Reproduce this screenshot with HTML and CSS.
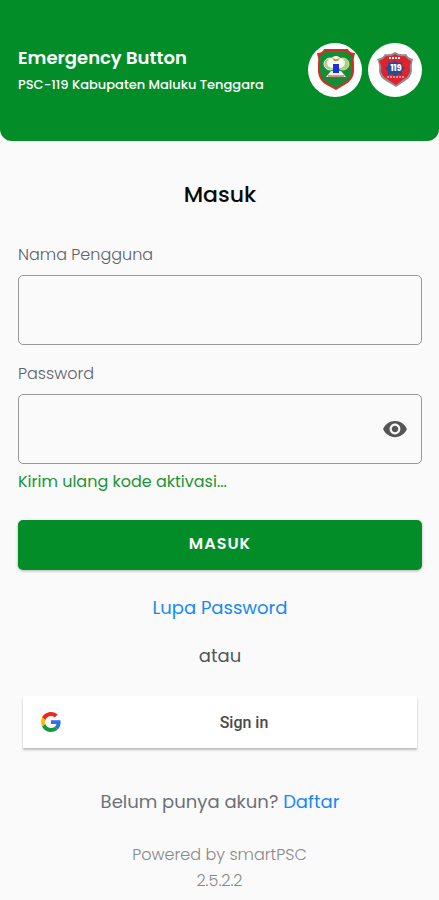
FILE: index.html
```html
<!DOCTYPE html>
<html lang="id">
<head>
  <meta charset="UTF-8" />
  <meta name="viewport" content="width=device-width, initial-scale=1.0"/>
  <title>Emergency Button - Masuk</title>
  <link rel="stylesheet" href="styles.css">
</head>
<body>
  <header class="topbar">
    <div class="brand">
      <div class="brand-name">Emergency Button</div>
      <div class="brand-region">PSC-119 Kabupaten Maluku Tenggara</div>
    </div>
    <div class="logos">
      <div class="logo">
        <svg width="54" height="54" viewBox="0 0 54 54" aria-hidden="true">
          <path d="M16 6 H40 Q41 10 47 10 Q45 16 46 22 V29 Q45 37 38 41 L28 47 L17 41 Q11 37 10 29 V22 Q11 16 9 10 Q15 10 16 6 Z" fill="#dc2a1e"/>
          <path d="M17 8 H39 Q40 12 45 12 Q43 17 44 22 V29 Q43 36 37 39 L28 45 L18 39 Q13 36 12 29 V22 Q13 17 11 12 Q16 12 17 8 Z" fill="#148c38"/>
          <circle cx="22" cy="21" r="6" fill="#a9cf8e" stroke="#efeecb" stroke-width="1"/>
          <circle cx="35" cy="21" r="6" fill="#a9cf8e" stroke="#ead56a" stroke-width="1"/>
          <circle cx="24" cy="20" r="5" fill="#f4f6ec"/>
          <circle cx="32" cy="20" r="5" fill="#f4f6ec"/>
          <circle cx="28" cy="19" r="6" fill="#fff"/>
          <path d="M24 15 L28 16 L32 15 L30 18 H26 Z" fill="#d69a2d"/>
          <path d="M23 28 H33 L38 34 H18 Z" fill="#f2f2f2"/>
          <rect x="25" y="21" width="6" height="9" fill="#1c2fe0"/>
          <path d="M20 33 H36" stroke="#d5281c" stroke-width="1"/>
        </svg>
      </div>
      <div class="logo">
        <svg width="54" height="54" viewBox="0 0 54 54" aria-hidden="true">
          <path d="M17 11 Q23 12 27 9 Q31 12 38 11 Q40 15 45 16 Q43 22 44 28 Q43 35 37 38 L28 44 L18 38 Q12 35 11 28 Q12 22 9 16 Q15 15 17 11 Z" fill="#8c8f94"/>
          <path d="M18 13 Q23 14 27 11 Q31 14 37 13 Q39 16 43 18 Q41 23 42 28 Q41 33 36 36 L28 42 L19 36 Q14 33 13 28 Q14 23 11 18 Q16 16 18 13 Z" fill="#e3202c"/>
          <path d="M27 17 L30 20 L34 19 V23 L37 25 L34 28 V32 L30 31 L27 34 L24 31 L20 32 V28 L17 25 L20 23 V19 L24 20 Z" fill="#254d91"/>
          <path d="M21 15 H33" stroke="#fff" stroke-width="2" stroke-dasharray="2 1"/>
          <text class="logo-number" x="28" y="28" text-anchor="middle">119</text>
          <path d="M19 34 H37" stroke="#fff" stroke-width="1" stroke-dasharray="2 1"/>
        </svg>
      </div>
    </div>
  </header>

  <main class="content">
    <h1 class="title">Masuk</h1>

    <form class="login-form">
      <div class="field">
        <label for="username">Nama Pengguna</label>
        <input type="text" id="username" name="username" class="text-input">
      </div>

      <div class="field">
        <label for="password">Password</label>
        <div class="password-box">
          <input type="password" id="password" name="password" class="password-input">
          <button type="button" class="toggle-password" aria-label="Tampilkan password">
            <svg width="26" height="26" viewBox="0 0 24 24" aria-hidden="true">
              <path fill="#555" d="M12 4.500C7 4.500 2.730 7.610 1 12c1.730 4.390 6 7.500 11 7.500s9.270-3.110 11-7.500c-1.730-4.390-6-7.500-11-7.500zM12 17c-2.760 0-5-2.240-5-5s2.240-5 5-5 5 2.240 5 5-2.240 5-5 5zm0-8c-1.660 0-3 1.340-3 3s1.340 3 3 3 3-1.340 3-3-1.340-3-3-3z"/>
            </svg>
          </button>
        </div>
      </div>

      <a href="#" class="resend">Kirim ulang kode aktivasi...</a>

      <button type="submit" class="btn-login">MASUK</button>
    </form>

    <a href="#" class="forgot">Lupa Password</a>
    <p class="or">atau</p>

    <button type="button" class="btn-google">
      <svg width="20" height="20" viewBox="0 0 48 48" aria-hidden="true">
        <path fill="#EA2A1E" d="M24 9.500c3.540 0 6.710 1.220 9.210 3.600l6.850-6.850C35.900 2.380 30.470 0 24 0 14.620 0 6.510 5.380 2.560 13.220l7.980 6.190C12.430 13.720 17.740 9.500 24 9.500z"/>
        <path fill="#2F6FEA" d="M46.980 24.550c0-1.570-.15-3.090-.38-4.550H24v9.020h12.940c-.58 2.960-2.260 5.480-4.780 7.180l7.730 6c4.510-4.180 7.090-10.360 7.090-17.650z"/>
        <path fill="#FBBC05" d="M10.530 28.590c-.48-1.450-.76-2.990-.76-4.590s.27-3.140.76-4.590l-7.980-6.190C.92 16.460 0 20.120 0 24c0 3.880.92 7.540 2.560 10.780l7.970-6.190z"/>
        <path fill="#109A3A" d="M24 48c6.480 0 11.930-2.130 15.890-5.810l-7.730-6c-2.150 1.450-4.920 2.300-8.160 2.300-6.260 0-11.570-4.220-13.470-9.910l-7.980 6.190C6.510 42.620 14.620 48 24 48z"/>
      </svg>
      <span class="google-label">Sign in</span>
    </button>

    <p class="register">Belum punya akun? <a href="#">Daftar</a></p>
  </main>

  <footer class="footer">
    <div>Powered by smartPSC</div>
    <div>2.5.2.2</div>
  </footer>
</body>
</html>
```
FILE: styles.css
```css
* {
  box-sizing: border-box;
}

body {
  font-family: Poppins, Inter, sans-serif;
  font-size: 16px;
  line-height: 24px;
  background-color: #fafafa;
  margin: 0;
}

a {
  color: #1688f8;
  text-decoration: none;
}

.topbar {
  display: flex;
  justify-content: space-between;
  align-items: center;
  background-color: #038d28;
  color: white;
  padding: 43px 17px 44px 18px;
  border-radius: 0 0 12px 12px;
}

.brand-name {
  font-size: 18px;
  font-weight: 600;
  line-height: 30px;
}

.brand-region {
  font-size: 13px;
  font-weight: 500;
}

.logos {
  display: flex;
  gap: 6px;
}

.logo {
  width: 54px;
  height: 54px;
  flex-shrink: 0;
  border-radius: 50%;
  background-color: white;
}

.logo svg {
  display: block;
}

.logo-number {
  font-size: 8px;
  font-weight: 800;
  fill: white;
}

.content {
  display: flex;
  flex-direction: column;
  padding: 38px 17px 0 18px;
}

.title {
  margin: 0 0 32px;
  font-size: 22px;
  font-weight: 500;
  line-height: 32px;
  text-align: center;
  color: #0a0a0a;
}

.login-form {
  display: flex;
  flex-direction: column;
}

.field {
  display: flex;
  flex-direction: column;
  gap: 8px;
}

.field + .field {
  margin-top: 17px;
}

.field label {
  font-weight: 300;
  color: #5c616b;
}

.text-input,
.password-box {
  width: 100%;
  height: 70px;
  border: 1px solid #999;
  border-radius: 5px;
  background-color: transparent;
}

.text-input,
.password-input {
  padding: 0 16px;
  font: inherit;
}

.password-box {
  display: flex;
  align-items: center;
  padding-right: 13px;
}

.password-input {
  flex: 1;
  min-width: 0;
  height: 100%;
  border: none;
  background: none;
}

.toggle-password {
  display: flex;
  padding: 0;
  border: none;
  background: none;
  cursor: pointer;
}

.resend {
  align-self: flex-start;
  margin-top: 6px;
  color: #1a9435;
}

.btn-login {
  height: 50px;
  margin-top: 26px;
  padding: 0 0 2px;
  border: none;
  border-radius: 5px;
  background-color: #038d28;
  color: white;
  font: inherit;
  font-weight: 600;
  letter-spacing: 1px;
  box-shadow: 0 1px 3px rgba(0, 0, 0, 0.3);
  cursor: pointer;
}

.forgot {
  align-self: center;
  margin-top: 24px;
  font-size: 18px;
  line-height: 28px;
}

.or {
  margin: 20px 0 0;
  font-size: 18px;
  line-height: 28px;
  text-align: center;
  color: #50555a;
}

.btn-google {
  display: flex;
  align-items: center;
  height: 52px;
  margin: 26px 5px 0;
  padding: 0 18px;
  border: none;
  background-color: white;
  box-shadow: 0 2px 2px rgba(0, 0, 0, 0.25);
  color: #4a4a4a;
  font-family: Roboto, sans-serif;
  font-size: 16px;
  font-weight: 500;
  cursor: pointer;
}

.google-label {
  flex: 1;
  padding-left: 28px;
  text-align: center;
}

.register {
  margin: 40px 0 0;
  font-size: 18px;
  line-height: 28px;
  text-align: center;
  color: #6a7078;
}

.footer {
  padding-top: 26px;
  font-weight: 300;
  line-height: 26px;
  text-align: center;
  color: #888;
}
```
